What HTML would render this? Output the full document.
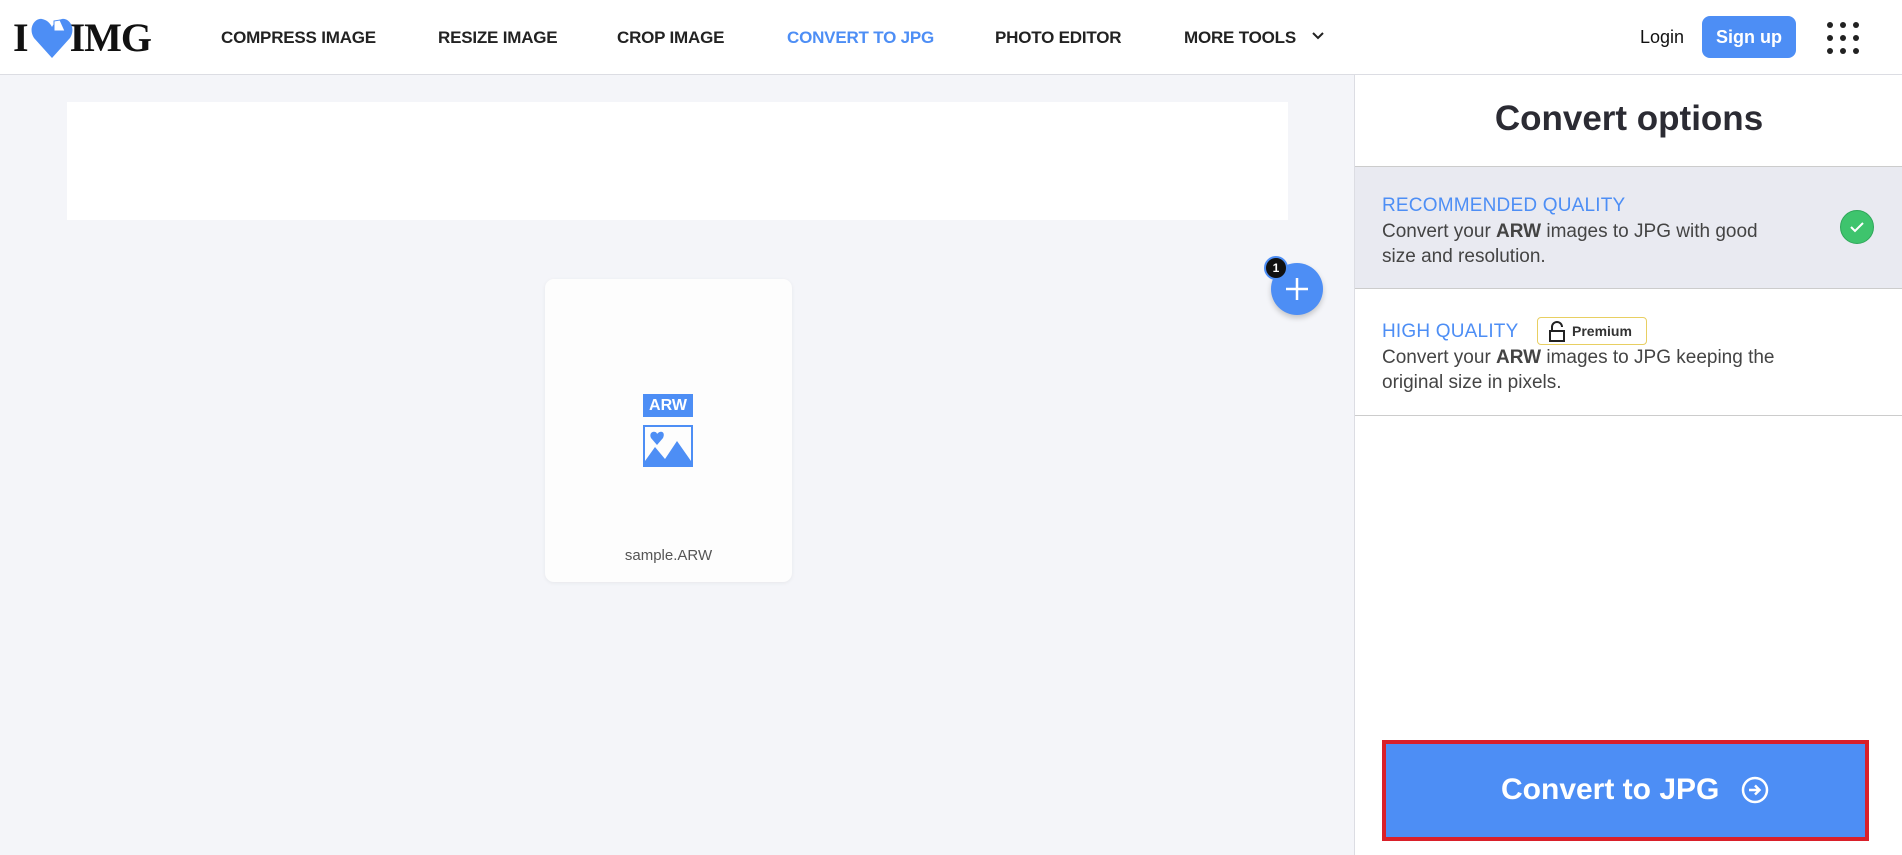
<!DOCTYPE html>
<html><head><meta charset="utf-8"><style>
*{margin:0;padding:0;box-sizing:border-box}
body{width:1902px;height:855px;overflow:hidden;background:#f4f5f9;font-family:"Liberation Sans",sans-serif;position:relative;color:#333}
.hdr{position:absolute;left:0;top:0;width:1902px;height:75px;background:#fff;border-bottom:1px solid #dcdde3}
.nav{position:absolute;top:28px;font-size:17px;font-weight:bold;color:#222;letter-spacing:-0.2px}
.side{position:absolute;left:1354px;top:75px;width:548px;height:780px;background:#fff;border-left:1px solid #dcdde3}
.abs{position:absolute}
.lbl{font-size:19px;color:#4d8ef5;letter-spacing:0.2px}
.txt{font-size:19px;color:#444;line-height:25px}
</style></head><body>
<div class="hdr">
 <div class="abs" style="left:13px;top:18px;font-family:'Liberation Serif',serif;font-weight:bold;font-size:40px;color:#111;letter-spacing:-1px;line-height:40px">I<span style="display:inline-block;width:42px"></span>IMG</div>
 <svg class="abs" style="left:30px;top:16px" width="44" height="44" viewBox="0 0 44 44"><path d="M22 42 L4 22 C-2 13 4 2 12 3 C17 4 20 7 22 11 C24 7 27 4 32 3 C40 2 46 13 40 22 Z" fill="#4d8ef5"/><path d="M24 5 L30 4 L35 15 L24 15 Z" fill="#fff" stroke="#4d8ef5" stroke-width="1"/></svg>
 <div class="nav" style="left:221px">COMPRESS IMAGE</div>
 <div class="nav" style="left:438px">RESIZE IMAGE</div>
 <div class="nav" style="left:617px">CROP IMAGE</div>
 <div class="nav" style="left:787px;color:#4d8ef5">CONVERT TO JPG</div>
 <div class="nav" style="left:995px">PHOTO EDITOR</div>
 <div class="nav" style="left:1184px">MORE TOOLS</div>
 <svg class="abs" style="left:1311px;top:31px" width="14" height="10"><path d="M2 2 L7 7 L12 2" stroke="#222" stroke-width="2" fill="none"/></svg>
 <div class="abs" style="left:1640px;top:27px;font-size:18px;color:#111">Login</div>
 <div class="abs" style="left:1702px;top:16px;width:94px;height:42px;background:#4d8ef5;border-radius:8px;color:#fff;font-weight:bold;font-size:18px;text-align:center;line-height:42px">Sign up</div>
 <svg class="abs" style="left:1826px;top:21px" width="34" height="34"><g fill="#222"><circle cx="4" cy="4" r="3"/><circle cx="17" cy="4" r="3"/><circle cx="30" cy="4" r="3"/><circle cx="4" cy="17" r="3"/><circle cx="17" cy="17" r="3"/><circle cx="30" cy="17" r="3"/><circle cx="4" cy="30" r="3"/><circle cx="17" cy="30" r="3"/><circle cx="30" cy="30" r="3"/></g></svg>
</div>
<div class="abs" style="left:67px;top:102px;width:1221px;height:118px;background:#fff"></div>
<div class="abs" style="left:545px;top:279px;width:247px;height:303px;background:#fdfdfd;border-radius:9px;box-shadow:0 1px 4px rgba(0,0,0,.06)"></div>
<div class="abs" style="left:643px;top:394px;width:50px;height:23px;background:#4d8ef5;color:#fff;font-weight:bold;font-size:16px;text-align:center;line-height:23px">ARW</div>
<svg class="abs" style="left:643px;top:425px" width="50" height="42" viewBox="0 0 50 42"><rect x="1" y="1" width="48" height="40" fill="none" stroke="#4d8ef5" stroke-width="2"/><path d="M2 40 L2 36 L12 22 L22 34 L34 16 L48 36 L48 40 Z" fill="#4d8ef5"/><path d="M14 20 L8 13 C6 9 9 6 12 7 C13 7 14 8 14 9 C15 8 16 7 17 7 C20 6 22 9 20 13 Z" fill="#4d8ef5"/></svg>
<div class="abs" style="left:545px;top:547px;width:247px;text-align:center;font-size:15px;color:#555">sample.ARW</div>
<div class="abs" style="left:1271px;top:263px;width:52px;height:52px;border-radius:50%;background:#4d8ef5;box-shadow:0 3px 6px rgba(0,0,0,.2)"></div>
<svg class="abs" style="left:1284px;top:276px" width="26" height="26"><path d="M13 2 V24 M2 13 H24" stroke="#fff" stroke-width="2.5"/></svg>
<div class="abs" style="left:1264px;top:256px;width:24px;height:24px;border-radius:50%;background:#111;border:2px solid #4d8ef5;color:#fff;font-size:12px;font-weight:bold;text-align:center;line-height:20px">1</div>
<div class="side">
 <div class="abs" style="left:0;top:24px;width:548px;text-align:center;font-size:35px;font-weight:bold;color:#2b2b33">Convert options</div>
 <div class="abs" style="left:0;top:91px;width:548px;height:123px;background:#e9eaf1;border-top:1px solid #ccc;border-bottom:1px solid #ccc"></div>
 <div class="abs lbl" style="left:27px;top:120px">RECOMMENDED QUALITY</div>
 <div class="abs txt" style="left:27px;top:144px">Convert your <b>ARW</b> images to JPG with good<br>size and resolution.</div>
 <svg class="abs" style="left:484px;top:134px" width="36" height="36"><circle cx="18" cy="18" r="16.5" fill="#3ec46d" stroke="#2fa75a" stroke-width="1"/><path d="M12 18 L16 22 L24 14" stroke="#fff" stroke-width="2" fill="none"/></svg>
 <div class="abs lbl" style="left:27px;top:246px">HIGH QUALITY</div>
 <div class="abs" style="left:182px;top:242px;width:110px;height:28px;border:1px solid #e8cf62;border-radius:4px;font-size:14px;font-weight:bold;color:#333;line-height:26px;padding-left:34px">Premium</div>
 <svg class="abs" style="left:192px;top:246px" width="20" height="22"><path d="M5 10 V6 A5 5 0 0 1 15 6" stroke="#222" stroke-width="2" fill="none"/><rect x="3" y="10" width="14" height="10" fill="none" stroke="#222" stroke-width="2"/></svg>
 <div class="abs txt" style="left:27px;top:270px">Convert your <b>ARW</b> images to JPG keeping the<br>original size in pixels.</div>
 <div class="abs" style="left:0;top:340px;width:548px;height:1px;background:#ccc"></div>
</div>
<div class="abs" style="left:1382px;top:740px;width:487px;height:101px;background:#4d8ef5;border:4px solid #d9202a"></div>
<div class="abs" style="left:1501px;top:773px;font-size:30px;font-weight:bold;color:#fff">Convert to JPG</div>
<svg class="abs" style="left:1740px;top:775px" width="30" height="30"><circle cx="15" cy="15" r="12" stroke="#fff" stroke-width="2.5" fill="none"/><path d="M9 15 H19 M15 10.5 L19.5 15 L15 19.5" stroke="#fff" stroke-width="2.5" fill="none"/></svg>
</body></html>
